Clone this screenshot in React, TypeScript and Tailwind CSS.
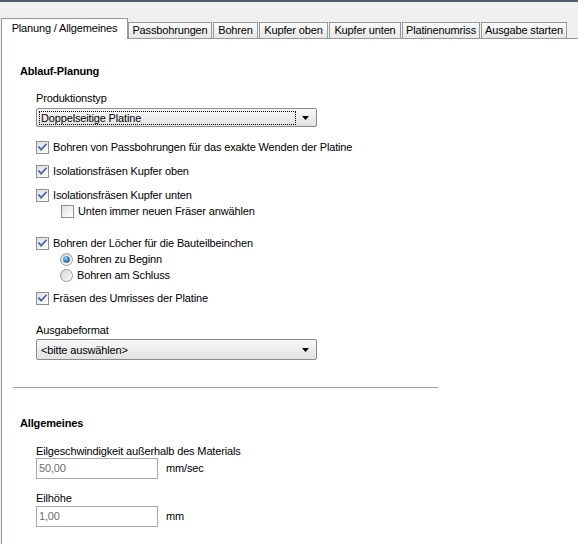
import React from "react";

const font = { fontFamily: '"Liberation Sans", Arial, sans-serif' };

function CheckBox({ checked }: { checked: boolean }) {
  return (
    <svg width="13" height="13" viewBox="0 0 13 13" className="shrink-0">
      <defs>
        <linearGradient id="cbg" x1="0" y1="0" x2="1" y2="1">
          <stop offset="0" stopColor="#dcdcdc" />
          <stop offset="0.6" stopColor="#f4f4f4" />
          <stop offset="1" stopColor="#ffffff" />
        </linearGradient>
      </defs>
      <rect x="0.5" y="0.5" width="12" height="12" fill="url(#cbg)" stroke="#8e8f8f" />
      {checked && (
        <path d="M3 6.2 L5.2 8.6 L10 3.4" fill="none" stroke="#4a67b0" strokeWidth="1.8" strokeLinecap="square" />
      )}
    </svg>
  );
}

function Radio({ checked }: { checked: boolean }) {
  return (
    <svg width="13" height="13" viewBox="0 0 13 13" className="shrink-0">
      <defs>
        <linearGradient id="rbg" x1="0" y1="0" x2="1" y2="1">
          <stop offset="0" stopColor="#d2d2d2" />
          <stop offset="1" stopColor="#ffffff" />
        </linearGradient>
        <radialGradient id="rdot" cx="0.4" cy="0.35" r="0.7">
          <stop offset="0" stopColor="#a9dcff" />
          <stop offset="0.5" stopColor="#3a8fd0" />
          <stop offset="1" stopColor="#0c4a86" />
        </radialGradient>
      </defs>
      <circle cx="6.5" cy="6.5" r="6" fill="url(#rbg)" stroke="#9a9a9a" />
      {checked && <circle cx="6.5" cy="6.5" r="3.3" fill="url(#rdot)" />}
    </svg>
  );
}

function Row({ children, className = "" }: { children: React.ReactNode; className?: string }) {
  return <div className={`flex items-center gap-[4px] h-[13px] leading-[13px] ${className}`}>{children}</div>;
}

function Select({ value, focused, h }: { value: string; focused?: boolean; h: string }) {
  return (
    <div className={`w-[281px] ${h} border border-[#8a8a8a] rounded-[2px] bg-gradient-to-b from-[#f8f8f8] to-[#e2e2e2] flex items-center pl-[2px] pr-[2px]`}>
      <div
        className={`flex-1 h-[14px] leading-[12px] pl-[1px] ${
          focused ? "border border-dotted border-black" : "border border-transparent"
        }`}
      >
        {value}
      </div>
      <div className="w-[18px] flex justify-center">
        <svg width="7" height="4" viewBox="0 0 7 4">
          <path d="M0 0 H7 L3.5 4 Z" fill="#000" />
        </svg>
      </div>
    </div>
  );
}

function Tab({ label }: { label: string }) {
  return (
    <div className="relative z-10 -mb-px h-[21px] w-[127px] bg-white border border-b-0 border-[#919b9c] flex justify-center pt-[3px] leading-[13px]">
      {label}
    </div>
  );
}

function TabW({ label, w }: { label: string; w: number }) {
  return (
    <div className="flex pl-[1px]" style={{ width: w + 1 }}>
      <div className="flex-1 h-[16px] border border-b-0 border-[#919b9c] bg-gradient-to-b from-[#fcfcfc] to-[#e6e6e6] flex items-center justify-center leading-[13px] whitespace-nowrap">
        {label}
      </div>
    </div>
  );
}

function Input({ value }: { value: string }) {
  return (
    <div className="w-[122px] h-[21px] border border-[#a9a9a9] bg-white text-[#6d6d6d] leading-[19px] pl-[2px]">
      {value}
    </div>
  );
}

export default function App() {
  return (
    <div className="w-[578px] h-[544px] bg-[#f0f0f0] overflow-hidden text-[11px] tracking-[-0.15px] text-black" style={font}>
      <div className="h-[2px] bg-[#525c68]" />
      <div className="h-[36px] flex items-end pl-[1px]">
        <Tab label="Planung / Allgemeines" />
        <div className="w-[84px] flex">
          <div className="flex-1 h-[16px] border border-b-0 border-[#919b9c] bg-gradient-to-b from-[#fcfcfc] to-[#e6e6e6] flex items-center justify-center leading-[13px]">
            Passbohrungen
          </div>
        </div>
        <TabW label="Bohren" w={45} />
        <TabW label="Kupfer oben" w={69} />
        <TabW label="Kupfer unten" w={72} />
        <TabW label="Platinenumriss" w={78} />
        <TabW label="Ausgabe starten" w={86} />
      </div>
      <div className="ml-[1px] h-[506px] bg-white border-t border-l border-[#919b9c] pt-[26px]">
        <div className="pl-[18px]">
          <div className="font-bold leading-[13px]">Ablauf-Planung</div>
          <div className="pl-[16px] mt-[14px]">
            <div className="leading-[13px]">Produktionstyp</div>
            <div className="mt-[3px]">
              <Select value="Doppelseitige Platine" focused h="h-[19px]" />
            </div>
            <Row className="mt-[14px]">
              <CheckBox checked />
              <span>Bohren von Passbohrungen für das exakte Wenden der Platine</span>
            </Row>
            <Row className="mt-[11px]">
              <CheckBox checked />
              <span>Isolationsfräsen Kupfer oben</span>
            </Row>
            <Row className="mt-[11px]">
              <CheckBox checked />
              <span>Isolationsfräsen Kupfer unten</span>
            </Row>
            <Row className="mt-[3px] pl-[25px]">
              <CheckBox checked={false} />
              <span>Unten immer neuen Fräser anwählen</span>
            </Row>
            <Row className="mt-[19px]">
              <CheckBox checked />
              <span>Bohren der Löcher für die Bauteilbeinchen</span>
            </Row>
            <Row className="mt-[3px] pl-[24px]">
              <Radio checked />
              <span>Bohren zu Beginn</span>
            </Row>
            <Row className="mt-[3px] pl-[24px]">
              <Radio checked={false} />
              <span>Bohren am Schluss</span>
            </Row>
            <Row className="mt-[10px]">
              <CheckBox checked />
              <span>Fräsen des Umrisses der Platine</span>
            </Row>
            <div className="leading-[13px] mt-[19px]">Ausgabeformat</div>
            <div className="mt-[2px]">
              <Select value="<bitte auswählen>" h="h-[21px]" />
            </div>
          </div>
        </div>
        <div className="ml-[11px] w-[425px] h-px bg-[#a0a0a0] mt-[27px]" />
        <div className="pl-[18px] mt-[29px]">
          <div className="font-bold leading-[13px]">Allgemeines</div>
          <div className="pl-[16px] mt-[15px]">
            <div className="leading-[13px]">Eilgeschwindigkeit außerhalb des Materials</div>
            <div className="mt-0 flex items-center gap-[8px]">
              <Input value="50,00" />
              <span>mm/sec</span>
            </div>
            <div className="leading-[13px] mt-[13px]">Eilhöhe</div>
            <div className="mt-[1px] flex items-center gap-[8px]">
              <Input value="1,00" />
              <span>mm</span>
            </div>
          </div>
        </div>
      </div>
    </div>
  );
}
